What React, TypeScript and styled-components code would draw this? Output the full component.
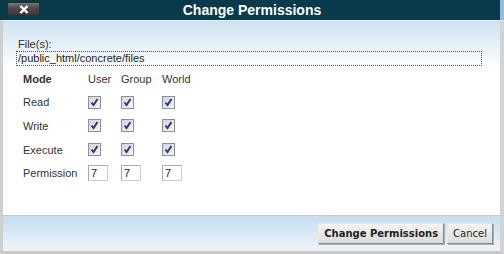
import React from 'react';
import styled, { createGlobalStyle } from 'styled-components';

const GlobalStyle = createGlobalStyle`
  html, body {
    margin: 0;
    padding: 0;
    background: #ffffff;
  }
  body {
    font-family: 'Liberation Sans', Arial, sans-serif;
  }
`;

const modes = ['Read', 'Write', 'Execute'];
const groups = ['User', 'Group', 'World'];

const CheckBox = () => (
  <Box>
    <svg width="9" height="9" viewBox="0 0 9 9">
      <path d="M1.5 4.5 L3.5 7 L7.5 1" fill="none" stroke="#2f3a7a" strokeWidth="2" />
    </svg>
  </Box>
);

const App = () => {
  return (
    <>
      <GlobalStyle />
      <Dialog>
        <TitleBar>
          <CloseButton>
            <svg width="10" height="9" viewBox="0 0 10 9">
              <path d="M1.5 1 L8.5 8 M8.5 1 L1.5 8" stroke="#ffffff" strokeWidth="2.4" />
            </svg>
          </CloseButton>
          <Title>Change Permissions</Title>
        </TitleBar>
        <Body>
          <Label>File(s):</Label>
          <PathField>/public_html/concrete/files</PathField>
          <Grid>
            <HeadCell>Mode</HeadCell>
            {groups.map((g) => (
              <Cell key={g}>{g}</Cell>
            ))}
            {modes.map((m) => (
              <React.Fragment key={m}>
                <Cell>{m}</Cell>
                {groups.map((g) => (
                  <Cell key={g}>
                    <CheckBox />
                  </Cell>
                ))}
              </React.Fragment>
            ))}
            <Cell>Permission</Cell>
            {groups.map((g) => (
              <Cell key={g}>
                <NumInput>7</NumInput>
              </Cell>
            ))}
          </Grid>
        </Body>
        <Footer>
          <Button $bold>Change Permissions</Button>
          <Button>Cancel</Button>
        </Footer>
      </Dialog>
    </>
  );
};

const Dialog = styled.div`
  width: 504px;
  height: 254px;
  display: flex;
  flex-direction: column;
  overflow: hidden;
`;

const TitleBar = styled.div`
  height: 20px;
  flex-shrink: 0;
  display: flex;
  align-items: center;
  position: relative;
  background: #073b4b;
  border-right: 4px solid #9ab8d8;
`;

const CloseButton = styled.div`
  position: absolute;
  left: 7px;
  top: 2px;
  width: 31px;
  height: 12px;
  display: flex;
  align-items: center;
  justify-content: center;
  border: 1px solid #2c2c2c;
  border-radius: 2px;
  background: linear-gradient(#777777, #4a4a4a 45%, #3a3a3a);
`;

const Title = styled.div`
  flex: 1;
  text-align: center;
  color: #ffffff;
  font-weight: bold;
  font-size: 14px;
  padding-left: 4px;
`;

const Body = styled.div`
  flex: 1;
  padding: 17px 0 0 13px;
  border-left: 3px solid #cfcfcf;
  border-right: 4px solid #d3d3d3;
  border-top: 1px solid #e8eef3;
  background: linear-gradient(#cde2f1 0px, #ffffff 48px);
  color: #333333;
  font-size: 11px;
`;

const Label = styled.div`
  line-height: 13px;
  padding-left: 2px;
`;

const PathField = styled.div`
  width: 463px;
  height: 13px;
  line-height: 13px;
  padding-left: 1px;
  border: 1px dotted #555555;
  color: #222222;
`;

const Grid = styled.div`
  display: grid;
  grid-template-columns: 65px 33px 41px 40px;
  grid-auto-rows: 23.6px;
  margin-top: 1px;
  padding-left: 7px;
`;

const Cell = styled.div`
  display: flex;
  align-items: center;
`;

const HeadCell = styled(Cell)`
  font-weight: bold;
`;

const Box = styled.div`
  width: 11px;
  height: 11px;
  display: flex;
  align-items: center;
  justify-content: center;
  border: 1px solid #8e8f93;
  background: linear-gradient(135deg, #d2d5dc, #f6f6f8);
`;

const NumInput = styled.div`
  width: 16px;
  height: 14px;
  line-height: 14px;
  padding-left: 2px;
  border: 1px solid #cccccc;
  border-top-color: #aaaaaa;
  border-left-color: #aaaaaa;
  background: #ffffff;
  color: #222222;
`;

const Footer = styled.div`
  height: 35px;
  flex-shrink: 0;
  display: flex;
  align-items: center;
  justify-content: flex-end;
  gap: 3px;
  padding-right: 7px;
  border-top: 1px solid #c4c8cc;
  border-left: 3px solid #cfcfcf;
  border-right: 4px solid #d3d3d3;
  border-bottom: 3px solid #c9c9c9;
  background: linear-gradient(#c4ddef, #eef4f9);
`;

const Button = styled.div<{ $bold?: boolean }>`
  height: 19px;
  line-height: 19px;
  padding: 0 5px;
  font-family: 'DejaVu Sans', Verdana, sans-serif;
  font-size: 10px;
  font-weight: ${(p) => (p.$bold ? 'bold' : 'normal')};
  color: #222222;
  background: linear-gradient(#f4f4f4, #dcdcdc);
  border: 1px solid #e8e8e8;
  border-right-color: #888888;
  border-bottom-color: #888888;
  box-shadow: 1px 1px 0 #b0b0b0;
`;

export default App;
